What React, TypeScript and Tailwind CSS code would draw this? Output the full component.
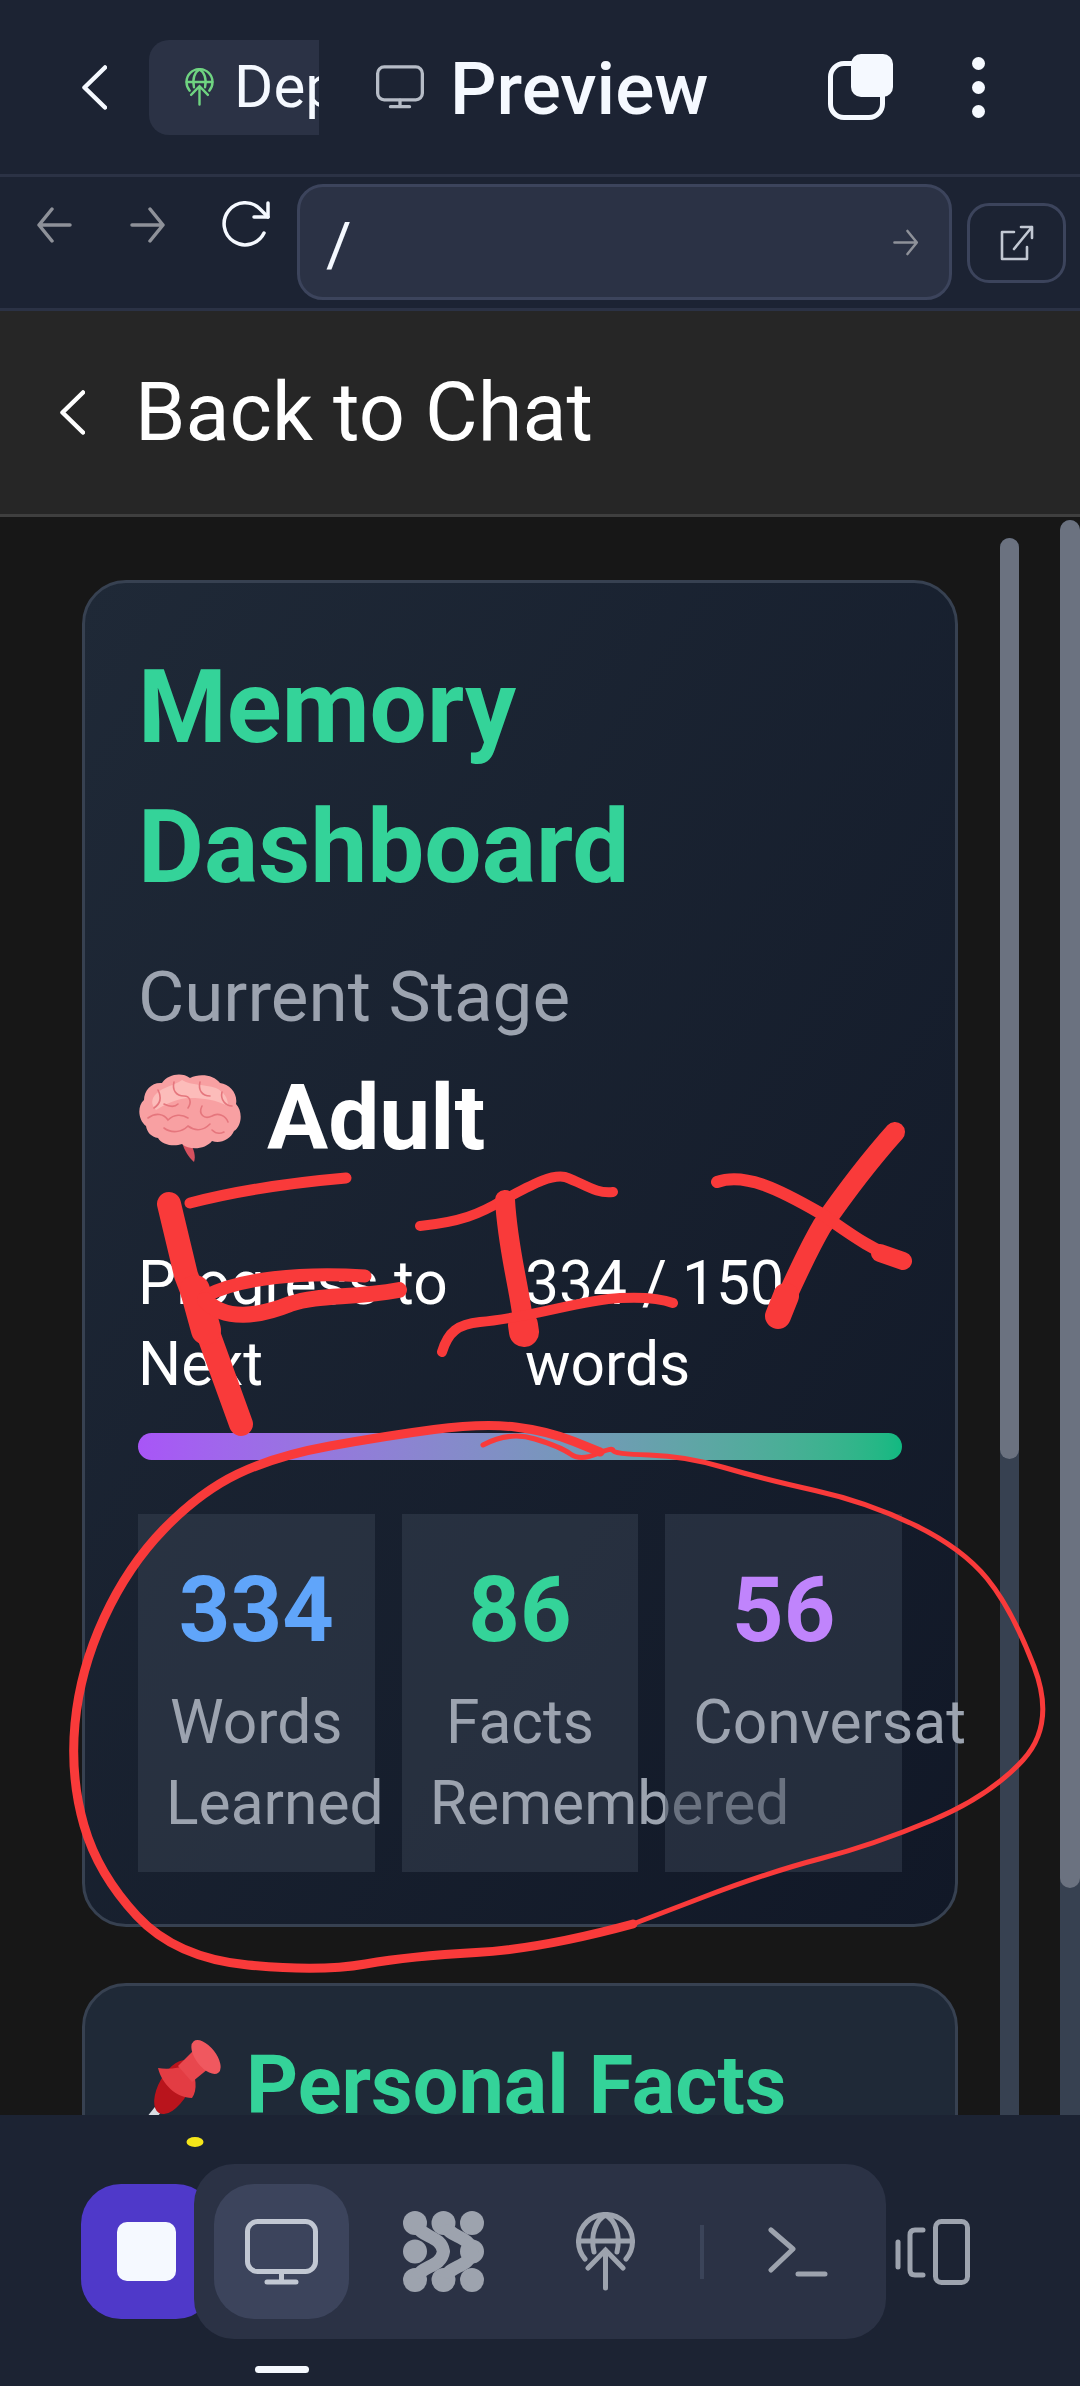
const smooth = (pts: number[][]) => {
    let d = `M${pts[0][0]} ${pts[0][1]}`;
    for (let i = 1; i < pts.length - 1; i++) {
        const mx = (pts[i][0] + pts[i + 1][0]) / 2;
        const my = (pts[i][1] + pts[i + 1][1]) / 2;
        d += ` Q${pts[i][0]} ${pts[i][1]} ${mx} ${my}`;
    }
    const last = pts[pts.length - 1];
    return d + ` L${last[0]} ${last[1]}`;
};

const circleRight = [[483, 1445], [509, 1431], [561, 1447], [580, 1461], [613, 1447], [613, 1454], [685, 1456], [763, 1479], [867, 1502], [962, 1548], [1012, 1609], [1056, 1724], [990, 1796], [873, 1845], [769, 1872], [633, 1924]];
const circleLeft = [[633, 1924], [541, 1949], [411, 1956], [320, 1972], [176, 1958], [98, 1874], [70, 1777], [80, 1670], [128, 1566], [200, 1492], [275, 1456], [385, 1436], [483, 1423], [548, 1431], [600, 1452]];

const Monitor = ({ className }: { className: string }) => (
    <svg viewBox="0 0 73 66" fill="none" stroke="currentColor" strokeWidth="5" strokeLinecap="round" className={className}>
        <rect x="2.5" y="2.5" width="68" height="50" rx="10" />
        <path d="M36.5 53V63M22 63H51" />
    </svg>
);

const GlobeUp = ({ className }: { className: string }) => (
    <svg viewBox="0 0 59 79" fill="none" stroke="currentColor" strokeWidth="5" strokeLinecap="round" className={className}>
        <path d="M9 47A27 27 0 1 1 50 47" />
        <path d="M3 29H56" />
        <path d="M18 40C14 22 20 8 29.5 3C39 8 45 22 41 40" />
        <path d="M29.5 76V38M12 56L29.5 38L47 56" />
    </svg>
);

const Arrow = ({ className, flip }: { className: string; flip?: boolean }) => (
    <svg viewBox="0 0 36 36" fill="none" stroke="currentColor" strokeWidth="3.5" strokeLinecap="round" strokeLinejoin="round" className={className}>
        {flip ? <path d="M34 18H3M16 2L3 18L16 34" /> : <path d="M2 18H33M20 2L33 18L20 34" />}
    </svg>
);

const Chevron = ({ className }: { className: string }) => (
    <svg viewBox="0 0 25 45" fill="none" stroke="currentColor" strokeWidth="4.5" strokeLinecap="round" strokeLinejoin="round" className={className}>
        <path d="M23 2.5L2.5 22.5L23 42.5" />
    </svg>
);

const Brain = () => (
    <svg viewBox="0 0 103 88" className="w-[103px] h-[88px] shrink-0">
        <path d="M52 68C56 76 58 82 56 88C51 84 46 76 44 68Z" fill="#d6515f" />
        <path d="M8 52C0 46 -1 32 6 26C6 16 14 8 24 9C30 0 44 -2 52 4C62 -1 76 1 82 9C92 10 100 20 98 30C105 37 104 52 96 57C92 66 82 70 74 67C68 75 52 77 44 70C36 73 24 71 20 64C13 63 9 58 8 52Z" fill="#f8a0a2" />
        <path d="M18 20C26 12 36 12 44 6C54 12 66 10 78 14C86 18 90 24 90 32C78 26 66 24 52 24C40 24 28 30 18 36C12 30 14 24 18 20Z" fill="#fcbcba" />
        <g fill="none" stroke="#e5767d" strokeWidth="1.6" strokeLinecap="round">
            <path d="M20 16C24 24 22 30 16 34" />
            <path d="M36 8C34 16 38 22 46 22C52 22 54 28 50 34" />
            <path d="M62 8C60 16 64 22 72 22" />
            <path d="M84 18C82 26 88 32 94 32" />
            <path d="M10 44C18 38 26 40 30 46C36 40 44 40 50 44" />
            <path d="M64 32C60 40 66 46 74 42C80 38 88 42 90 48" />
            <path d="M26 54C34 60 44 58 50 52C58 58 66 56 72 50" />
            <path d="M40 30C36 34 30 32 26 30" />
            <path d="M74 56C78 60 82 60 86 58" />
        </g>
    </svg>
);

const Pin = () => (
    <svg viewBox="0 0 84 96" className="w-[84px] h-[96px] shrink-0">
        <path d="M2 92L34 52" stroke="#d8dce2" strokeWidth="8" />
        <ellipse cx="36" cy="47" rx="15" ry="30" transform="rotate(30 36 47)" fill="#b9141c" />
        <path d="M20 28C24 44 38 58 54 58C60 50 58 36 52 24C42 28 30 30 20 28Z" fill="#e33c43" />
        <path d="M40 26L58 8L76 24L54 42Z" fill="#e8474e" />
        <ellipse cx="68" cy="17" rx="10" ry="20" transform="rotate(-38 68 17)" fill="#f0585f" />
    </svg>
);

const stats = [
    { value: '334', color: 'text-[#60a5fa]', lines: ['Words', 'Learned'] },
    { value: '86', color: 'text-[#34d399]', lines: ['Facts', 'Remembered'] },
    { value: '56', color: 'text-[#c084fc]', lines: ['Conversat'] },
];

const Annotations = () => (
    <svg viewBox="0 0 1080 2386" fill="none" stroke="#f93a3a" strokeLinecap="round" strokeLinejoin="round" className="absolute top-0 left-0 w-[1080px] h-[2386px] pointer-events-none z-10">
        {/* F */}
        <path d="M169 1204L186 1275L204 1322L241 1424" strokeWidth="24" />
        <path d="M195 1290L206 1330" strokeWidth="30" />
        <path d="M190 1203C240 1190 300 1182 346 1178" strokeWidth="11" />
        <path d="M205 1296C240 1278 300 1272 365 1276" strokeWidth="13" />
        <path d="M205 1300C225 1322 260 1316 290 1304C320 1294 350 1299 399 1290" strokeWidth="16" />
        {/* I */}
        <path d="M420 1226C460 1222 480 1214 503 1200C530 1186 550 1174 565 1177C585 1184 595 1194 613 1192" strokeWidth="10" />
        <path d="M505 1200C508 1250 518 1280 523 1320" strokeWidth="20" />
        <path d="M523 1325L524 1332" strokeWidth="30" />
        <path d="M442 1352C448 1332 458 1324 480 1322C530 1318 580 1300 620 1298C640 1297 660 1298 673 1303" strokeWidth="10" />
        {/* X */}
        <path d="M895 1132C870 1160 840 1200 822 1226C805 1255 790 1290 778 1316" strokeWidth="20" />
        <path d="M786 1296L778 1316" strokeWidth="26" />
        <path d="M717 1182C745 1172 780 1190 820 1213C845 1230 870 1250 903 1261" strokeWidth="12" />
        <path d="M880 1253L903 1261" strokeWidth="18" />
        {/* ring round the stats */}
        <path d={smooth(circleRight)} strokeWidth="5" />
        <path d={smooth(circleLeft)} strokeWidth="9" />
        <ellipse cx="195" cy="2142" rx="8.5" ry="5" fill="#f5e61a" stroke="none" />
    </svg>
);

export default function App() {
    return (
        <div className="relative w-[1080px] h-[2386px] flex flex-col overflow-hidden bg-[#171717] font-[Roboto,sans-serif]">
            {/* top bar */}
            <div className="h-[177px] shrink-0 flex items-center pl-[82px] bg-[#1c2333] border-b-[3px] border-[#2b3245]">
                <Chevron className="w-[25px] h-[45px] text-[#f5f9ff]" />
                <div className="ml-[42px] w-[170px] h-[95px] flex items-center pl-[35px] gap-[19px] rounded-l-[20px] bg-[#2b3245] overflow-hidden">
                    <GlobeUp className="w-[31px] h-[38px] shrink-0 text-[#6fd481]" />
                    <span className="text-[60px] text-[#f5f9ff] leading-none">Deployments</span>
                </div>
                <Monitor className="ml-[57px] w-[48px] h-[44px] text-[#b6bcc7]" />
                <span className="ml-[26px] mt-[4px] text-[73px] leading-none font-medium text-[#f5f9ff]">Preview</span>
                <div className="relative ml-[120px] w-[65px] h-[66px]">
                    <div className="absolute left-0 bottom-0 w-[57px] h-[59px] rounded-[16px] border-[5px] border-[#f5f9ff]" />
                    <div className="absolute right-0 top-0 w-[42px] h-[43px] rounded-[10px] bg-[#f5f9ff]" />
                </div>
                <div className="ml-[79px] flex flex-col gap-[11px]">
                    <div className="w-[13px] h-[13px] rounded-full bg-[#f5f9ff]" />
                    <div className="w-[13px] h-[13px] rounded-full bg-[#f5f9ff]" />
                    <div className="w-[13px] h-[13px] rounded-full bg-[#f5f9ff]" />
                </div>
            </div>

            {/* address bar */}
            <div className="h-[134px] shrink-0 flex items-start pl-[36px] bg-[#1c2333] border-b-[3px] border-[#2b3245]">
                <Arrow flip className="mt-[30px] w-[36px] h-[36px] text-[#8e9199]" />
                <Arrow className="mt-[30px] ml-[58px] w-[36px] h-[36px] text-[#8e9199]" />
                <svg viewBox="0 0 48 48" fill="none" stroke="#f5f9ff" strokeWidth="3.5" strokeLinecap="round" strokeLinejoin="round" className="mt-[23px] ml-[56px] w-[48px] h-[48px]">
                    <path d="M42 33A21 21 0 1 1 38 9L46 17" />
                    <path d="M46 3V17H32" />
                </svg>
                <div className="mt-[7px] ml-[27px] w-[655px] h-[116px] flex items-center justify-between pl-[26px] pr-[30px] rounded-[26px] bg-[#2b3245] border-[3px] border-[#3c445c]">
                    <span className="mt-[6px] text-[62px] leading-none text-[#f5f9ff]">/</span>
                    <Arrow className="w-[26px] h-[27px] text-[#8e9199]" />
                </div>
                <div className="mt-[26px] ml-[15px] w-[99px] h-[80px] flex items-center justify-center rounded-[22px] border-[3px] border-[#3c445c]">
                    <svg viewBox="0 0 34 36" fill="none" stroke="#c2c8d3" strokeWidth="2.6" strokeLinecap="round" strokeLinejoin="round" className="w-[34px] h-[36px]">
                        <path d="M14 7H2V34H27V22" />
                        <path d="M14 24L32 2M21 2H32V13" />
                    </svg>
                </div>
            </div>

            {/* back link */}
            <div className="h-[206px] shrink-0 flex items-center gap-[50px] pl-[60px] bg-[#262626] border-b-[3px] border-[#3f3f3f]">
                <Chevron className="w-[25px] h-[45px] text-white" />
                <span className="text-[81px] leading-none text-white">Back to Chat</span>
            </div>

            {/* scroll area */}
            <div className="flex-1 min-h-0 flex overflow-hidden">
                <div className="w-[876px] ml-[82px] pt-[63px] shrink-0 flex flex-col gap-[56px]">
                    <div className="shrink-0 rounded-[44px] border-[3px] border-[#374151] bg-gradient-to-br from-[#1f2937] to-[#111827] px-[53px] pt-[55px] pb-[52px]">
                        <h1 className="text-[101.5px] leading-[140px] font-bold text-[#34d399]">Memory<br />Dashboard</h1>
                        <div className="mt-[33px] text-[71px] leading-[92px] text-[#9ca3af]">Current Stage</div>
                        <div className="mt-[11px] flex items-center gap-[26px]">
                            <Brain />
                            <span className="text-[91px] leading-[128px] font-bold text-white">Adult</span>
                        </div>
                        <div className="mt-[61px] flex text-[60.5px] leading-[81px] text-white">
                            <div className="w-[387px] shrink-0">Progress to Next</div>
                            <div className="flex-1">334 / 150 words</div>
                        </div>
                        <div className="mt-[28px] h-[27px] rounded-full bg-gradient-to-r from-[#a855f7] to-[#10b981]" />
                        <div className="mt-[54px] grid grid-cols-3 gap-[27px]">
                            {stats.map(stat => (
                                <div key={stat.value} className="relative h-[358px] px-[28px] pt-[28px] text-center bg-[#374151]/50">
                                    <div className={`text-[90px] leading-[138px] font-bold ${stat.color}`}>{stat.value}</div>
                                    <div className="mt-[2px] text-[60.5px] leading-[81px] text-[#9ca3af]">
                                        {stat.lines.map(line => <div key={line}>{line}</div>)}
                                    </div>
                                </div>
                            ))}
                        </div>
                    </div>
                    <div className="shrink-0 h-[300px] rounded-[44px] border-[3px] border-[#374151] bg-[#1f2937] px-[53px] pt-[44px]">
                        <div className="flex items-start gap-[24px]">
                            <div className="mt-[10px]"><Pin /></div>
                            <h2 className="text-[81px] leading-[111px] font-bold text-[#34d399] whitespace-nowrap">Personal Facts</h2>
                        </div>
                    </div>
                </div>
                <div className="ml-[42px] mt-[21px] w-[19px] shrink-0 rounded-t-full bg-[#374151]">
                    <div className="h-[921px] rounded-full bg-[#6b7280]" />
                </div>
                <div className="ml-[41px] mt-[3px] w-[20px] shrink-0 rounded-t-full bg-[#374151]">
                    <div className="h-[1368px] rounded-full bg-[#6b7280]" />
                </div>
            </div>

            {/* bottom toolbar */}
            <div className="h-[271px] shrink-0 flex flex-col pt-[49px] bg-[#1c2333]">
                <div className="h-[175px] flex items-center pl-[81px]">
                    <div className="w-[135px] h-[135px] flex items-center justify-center rounded-[40px] bg-[#4f39c9]">
                        <div className="w-[59px] h-[59px] rounded-[10px] bg-[#f5f9ff] -ml-[4px]" />
                    </div>
                    <div className="relative -ml-[22px] w-[692px] h-[175px] flex items-center pl-[20px] rounded-[40px] bg-[#2b3245]">
                        <div className="w-[135px] h-[135px] flex items-center justify-center rounded-[40px] bg-[#3c445c]">
                            <Monitor className="w-[73px] h-[66px] text-[#c2c8d3]" />
                        </div>
                        <svg viewBox="0 0 81 81" fill="none" stroke="#9da3ae" className="ml-[54px] w-[81px] h-[81px]">
                            <circle cx="12" cy="12" r="12" fill="#9da3ae" stroke="none" />
                            <circle cx="40.5" cy="12" r="12" fill="#9da3ae" stroke="none" />
                            <circle cx="69" cy="12" r="12" fill="#9da3ae" stroke="none" />
                            <circle cx="12" cy="40.5" r="12" fill="#9da3ae" stroke="none" />
                            <circle cx="69" cy="40.5" r="12" fill="#9da3ae" stroke="none" />
                            <circle cx="12" cy="69" r="12" fill="#9da3ae" stroke="none" />
                            <circle cx="40.5" cy="69" r="12" fill="#9da3ae" stroke="none" />
                            <circle cx="69" cy="69" r="12" fill="#9da3ae" stroke="none" />
                            <path d="M14 14C18 27 38 24 40.5 40.5C38 57 18 54 14 67" strokeWidth="13" />
                            <path d="M42.5 14C46 27 66.5 24 69 40.5C66.5 57 46 54 42.5 67" strokeWidth="13" />
                        </svg>
                        <GlobeUp className="ml-[92px] w-[59px] h-[79px] text-[#9da3ae]" />
                        <div className="ml-[65px] w-[4px] h-[54px] bg-[#3b4459]" />
                        <svg viewBox="0 0 60 50" fill="none" stroke="#9da3ae" strokeWidth="5" strokeLinecap="round" strokeLinejoin="round" className="ml-[64px] w-[60px] h-[50px]">
                            <path d="M3 3L25 22L3 43M30 47H57" />
                        </svg>
                    </div>
                    <svg viewBox="0 0 76 66" fill="none" stroke="#9da3ae" strokeWidth="5" strokeLinecap="round" strokeLinejoin="round" className="ml-[8px] w-[76px] h-[66px]">
                        <path d="M4 23V48" />
                        <path d="M29 11H21Q16 11 16 16V51Q16 56 21 56H29" />
                        <rect x="41.5" y="2.5" width="32" height="61" rx="6" />
                    </svg>
                </div>
                <div className="mt-[27px] ml-[255px] w-[54px] h-[7px] rounded-full bg-[#f5f9ff]" />
            </div>

            <Annotations />
        </div>
    );
}
